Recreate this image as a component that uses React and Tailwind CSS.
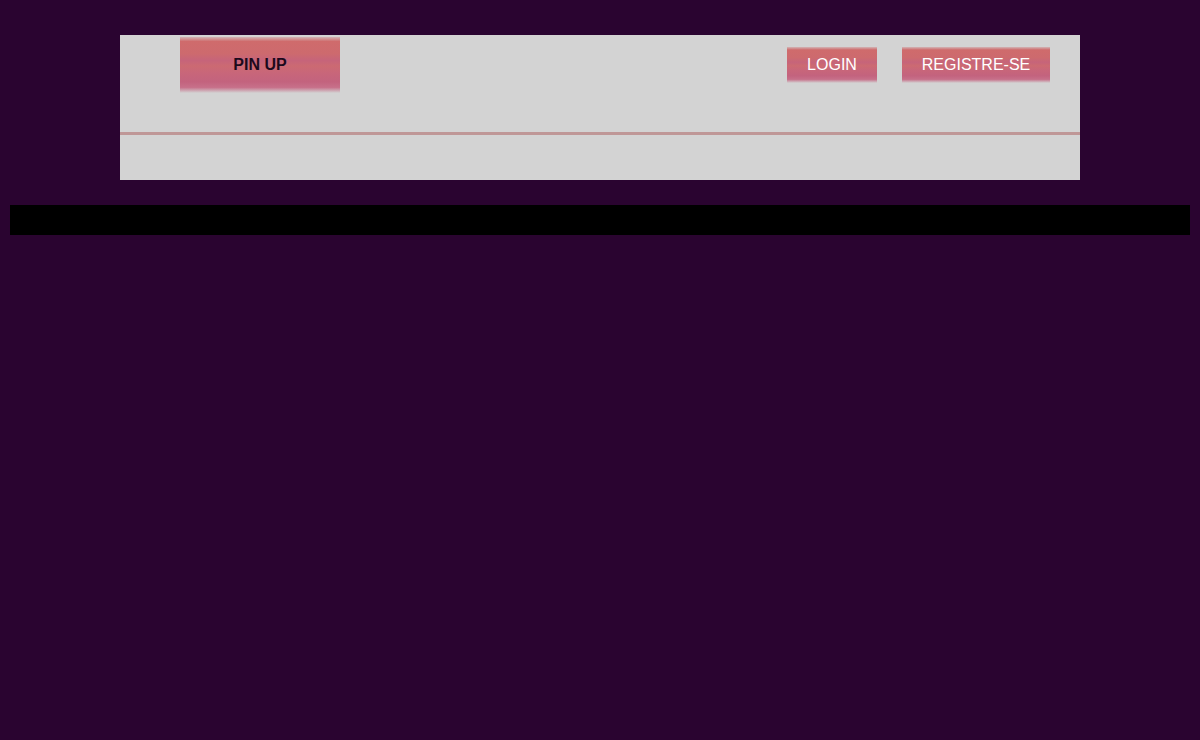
const stripe =
  "bg-[linear-gradient(to_bottom,rgba(205,107,110,0.3)_0%,#cf6b6c_8%,#cd6a6e_30%,#c6647a_42%,#cc6a72_52%,#c8667a_64%,#c3637e_80%,#c7708a_90%,rgba(211,211,211,0)_100%)]";

const NavButton = ({ children, className }) => (
  <button className={`${stripe} h-[36px] text-white text-[16px] leading-none ${className}`}>
    {children}
  </button>
);

export default function App() {
  return (
    <div className="min-h-[740px] bg-[#2a0430] pt-[35px] font-['Liberation_Sans',Arial,sans-serif]">
      <header className="mx-[120px] bg-[#d3d3d3]">
        <div className="flex items-start justify-between pl-[60px] pr-[30px] pt-[2px] h-[97px]">
          <a className={`${stripe} w-[160px] h-[56px] flex items-center justify-center font-bold text-[16px] text-[#1b0a1c]`}>
            PIN UP
          </a>
          <div className="flex gap-[25px] mt-[10px]">
            <NavButton className="w-[90px]">LOGIN</NavButton>
            <NavButton className="w-[148px]">REGISTRE-SE</NavButton>
          </div>
        </div>
        <div className="h-[3px] bg-[#bf9797]" />
        <div className="h-[45px]" />
      </header>
      <div className="mx-[10px] mt-[25px] h-[30px] bg-black" />
    </div>
  );
}
